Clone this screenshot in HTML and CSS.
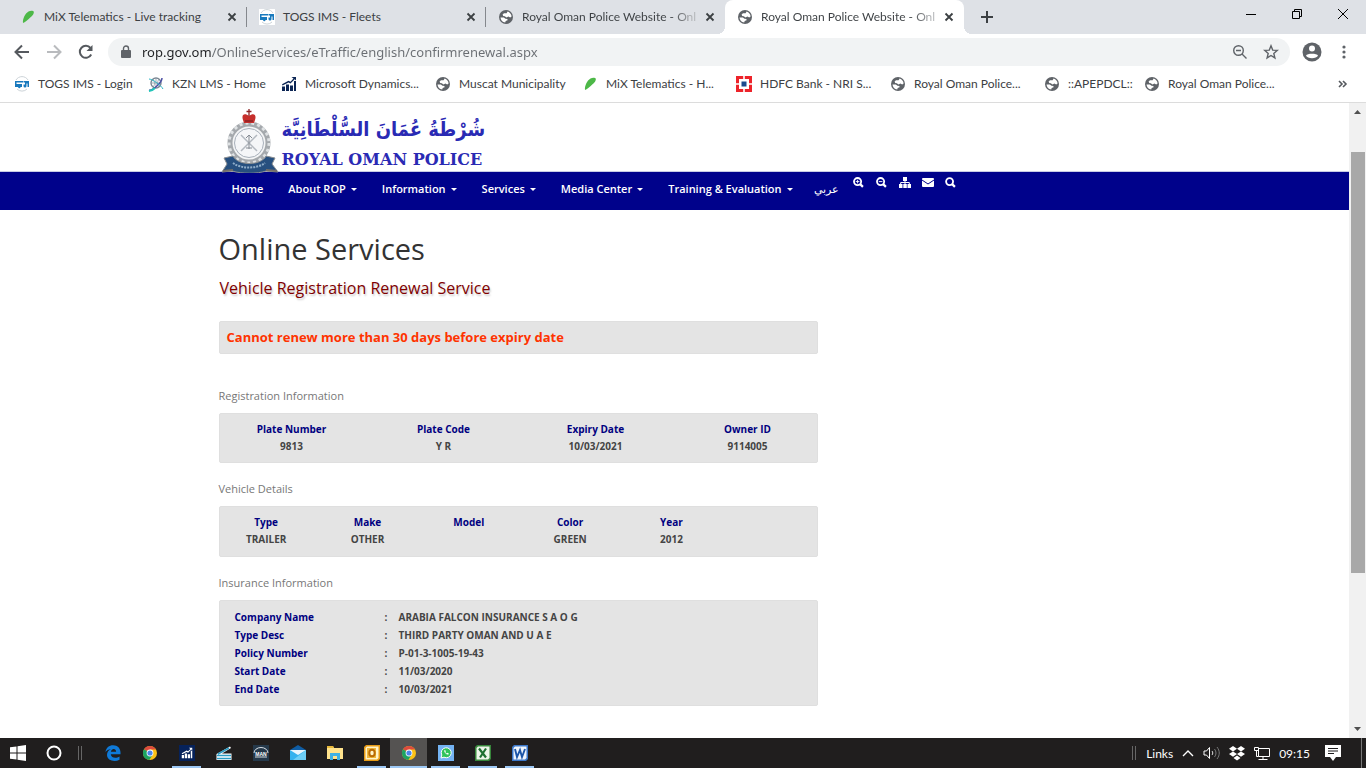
FILE: index.html
```html
<!DOCTYPE html>
<html lang="en">
<head>
<meta charset="utf-8">
<meta name="viewport" content="width=device-width, initial-scale=1">
<title>Royal Oman Police Website - Online Services</title>
<link rel="stylesheet" href="styles.css">
</head>
<body>
<svg class="defs" aria-hidden="true">
  <symbol id="globe" viewBox="0 0 14 14"><circle cx="7" cy="7" r="7" fill="#5f6368"/><path d="M5 3.200h2.600l1-1.600c2.300.7 3.900 2.700 4 5l-1.400.8-1.800-.8-1.900.9-1.700-1.200-1.600-.3-.6-1.500zM1.500 7.400l3.300.1 1.700 1.300 1.900.3.200 1.200-1.900.8-.5 1.500c-2.700-.4-4.500-2.600-4.700-5.200z" fill="#fff"/></symbol>
  <symbol id="leaf" viewBox="0 0 16 16"><path d="M3 14C2.500 10 5 4.500 8.500 2.500c2-1.100 4.800-1 5.300.2.500 1.700-1.300 4-3.800 6C7.500 10.800 5 13.500 3 14z" fill="#4db848"/></symbol>
  <symbol id="togs" viewBox="0 0 16 16"><rect width="16" height="16" fill="#fff"/><path d="M2 4a7 7 0 0 1 12 0M3 13a7 7 0 0 0 10 0" fill="none" stroke="#ccd3d8"/><path d="M1 5h8v1.500H2.500V8H8v3H6.500a1.200 1.200 0 0 1-2.400 0H1zM9.500 5H15v6h-1.500V7.500h-1V10a1.500 1.500 0 0 1-3 0V8.500H11V6.500H9.500z" fill="#1879bd"/></symbol>
  <symbol id="kzn" viewBox="0 0 16 16"><circle cx="8" cy="7" r="5" fill="none" stroke="#7b8793" stroke-width="1.400"/><path d="M3 7h10M8 2v10M5 3c2 3 2 6 0 8M11 3c-2 3-2 6 0 8" fill="none" stroke="#8a97a5" stroke-width=".8"/><path d="M1 14C4 15 14 7 14 2" fill="none" stroke="#4b4ea5" stroke-width="1.500"/><path d="M1 3c3 0 12 6 14 10" fill="none" stroke="#2bb5c4" stroke-width="1"/><path d="M1 15c3 0 4-1 6-3" fill="none" stroke="#22c4b8" stroke-width="2"/></symbol>
  <symbol id="dyn" viewBox="0 0 16 16"><path d="M1 10.500h3V15H1zM5 8.500h3V15H5zM9 9.500h3V15H9zM13 5h2v10h-2zM10.500 1H15v3.500l-1.300-1.200-4.200 4.200-2-1-6 3L1 8.300l6.500-3.500 2 1 3-3.200z" fill="currentColor"/></symbol>
  <symbol id="hdfc" viewBox="0 0 16 16"><path fill="#ed232a" d="M0 0h16v16H0z"/><path fill="#fff" d="M3 3h10v10H3zM7.200 0h1.600v16H7.200zM0 7.200h16v1.600H0z"/><path fill="#1b4a8d" d="M5.500 5.500h5v5h-5z"/></symbol>
  <symbol id="close" viewBox="0 0 16 16"><path d="m4.500 4.500 7 7m0-7-7 7" stroke="#3c4043" stroke-width="1.800"/></symbol>
  <symbol id="chrome" viewBox="0 0 16 16"><circle cx="8" cy="8" r="7" fill="#fbc116"/><path d="M8 8 2 4.300A7 7 0 0 1 14.100 4.600H8z" fill="#dd4b3e"/><path d="M2 4.300A7 7 0 0 0 7.300 15L10.500 10 8 8z" fill="#1da362"/><circle cx="8" cy="8" r="3.400" fill="#fff"/><circle cx="8" cy="8" r="2.600" fill="#4a86e8"/></symbol>
  <symbol id="zoomin" viewBox="0 0 12 12"><circle cx="5" cy="5" r="3.900" fill="none" stroke="#fff" stroke-width="2"/><path d="m7.800 7.800 3 3" stroke="#fff" stroke-width="2.400"/><path d="M3 5h4M5 3v4" stroke="#fff"/></symbol>
  <symbol id="zoomout" viewBox="0 0 12 12"><circle cx="5" cy="5" r="3.900" fill="none" stroke="#fff" stroke-width="2"/><path d="m7.800 7.800 3 3" stroke="#fff" stroke-width="2.400"/><path d="M3 5h4" stroke="#fff"/></symbol>
</svg>

<header class="tabs">
  <div class="tab"><svg class="i16"><use href="#leaf"/></svg><span class="tab-title">MiX Telematics - Live tracking</span><button class="x" aria-label="Close tab"><svg class="i16"><use href="#close"/></svg></button></div>
  <div class="tab"><svg class="i16"><use href="#togs"/></svg><span class="tab-title">TOGS IMS - Fleets</span><button class="x" aria-label="Close tab"><svg class="i16"><use href="#close"/></svg></button></div>
  <div class="tab plain"><svg class="i14"><use href="#globe"/></svg><span class="tab-title fade">Royal Oman Police Website - Onl</span><button class="x" aria-label="Close tab"><svg class="i16"><use href="#close"/></svg></button></div>
  <div class="tab active"><svg class="i14"><use href="#globe"/></svg><span class="tab-title fade">Royal Oman Police Website - Onl</span><button class="x" aria-label="Close tab"><svg class="i16"><use href="#close"/></svg></button></div>
  <button class="newtab" aria-label="New tab"><svg width="14" height="14"><path d="M7 1v12M1 7h12" stroke="#3c4043" stroke-width="2"/></svg></button>
  <div class="winctl">
    <button aria-label="Minimize"><svg width="12" height="12"><path d="M1 6.500h10" stroke="#000"/></svg></button>
    <button aria-label="Restore"><svg width="12" height="12" fill="none" stroke="#000"><path d="M1.500 3.500h7v7h-7zM3.500 3.500v-2h7v7h-2"/></svg></button>
    <button aria-label="Close"><svg width="12" height="12"><path d="m1 1 10 10M11 1 1 11" stroke="#000"/></svg></button>
  </div>
</header>

<div class="toolbar">
  <button class="tool" aria-label="Back"><svg width="16" height="16" fill="none" stroke="#55595e" stroke-width="2"><path d="M15 8H2M8 1.500 1.500 8 8 14.500"/></svg></button>
  <button class="tool" aria-label="Forward"><svg width="16" height="16" fill="none" stroke="#b9bbbe" stroke-width="2"><path d="M1 8h13M8 1.500 14.500 8 8 14.500"/></svg></button>
  <button class="tool" aria-label="Reload"><svg width="16" height="16"><path d="M13.200 10.500A6 6 0 1 1 12.500 4" fill="none" stroke="#55595e" stroke-width="2"/><path d="M14.500 1v6h-6z" fill="#55595e"/></svg></button>
  <div class="omni">
    <svg width="10" height="14"><rect y="5" width="10" height="8" rx="1" fill="#5f6368"/><path d="M2.500 5.500V3.500a2.500 2.500 0 0 1 5 0v2" fill="none" stroke="#5f6368" stroke-width="1.400"/></svg>
    <input class="url" aria-label="Address" value="rop.gov.om/OnlineServices/eTraffic/english/confirmrenewal.aspx">
    <button aria-label="Zoom"><svg width="16" height="16" fill="none" stroke="#5f6368" stroke-width="1.400"><circle cx="6.500" cy="6.500" r="4.800"/><path d="M4 6.500h5M10 10l4.500 4.500"/></svg></button>
    <button aria-label="Bookmark"><svg width="16" height="16" fill="none" stroke="#5f6368" stroke-width="1.400"><path d="m8 1.800 1.700 4.300 4.600.3-3.500 3 1.100 4.500L8 11.500l-3.900 2.400 1.100-4.500-3.500-3 4.600-.3z"/></svg></button>
  </div>
  <button class="avatar" aria-label="Profile"><svg width="20" height="20"><circle cx="10" cy="10" r="9.500" fill="#5f6368"/><circle cx="10" cy="6.500" r="3" fill="#fff"/><path d="M4 13.500c1-2.200 11-2.200 12 0-1.500 3.700-10.500 3.700-12 0z" fill="#fff"/></svg></button>
  <button class="dots" aria-label="Menu"><svg width="4" height="14" fill="#5f6368"><circle cx="2" cy="2" r="1.600"/><circle cx="2" cy="7" r="1.600"/><circle cx="2" cy="12" r="1.600"/></svg></button>
</div>

<nav class="marks" aria-label="Bookmarks">
  <a href="#"><svg class="i16"><use href="#togs"/></svg>TOGS IMS - Login</a>
  <a href="#"><svg class="i16"><use href="#kzn"/></svg>KZN LMS - Home</a>
  <a href="#"><svg class="i16 navy"><use href="#dyn"/></svg>Microsoft Dynamics...</a>
  <a href="#"><svg class="i14"><use href="#globe"/></svg>Muscat Municipality</a>
  <a href="#"><svg class="i16"><use href="#leaf"/></svg>MiX Telematics - H...</a>
  <a href="#"><svg class="i16"><use href="#hdfc"/></svg>HDFC Bank - NRI S...</a>
  <a href="#"><svg class="i14"><use href="#globe"/></svg>Royal Oman Police...</a>
  <a href="#"><svg class="i14"><use href="#globe"/></svg>::APEPDCL::</a>
  <a href="#"><svg class="i14"><use href="#globe"/></svg>Royal Oman Police...</a>
  <button class="more" aria-label="More bookmarks"><svg width="10" height="8" fill="none" stroke="#55595e" stroke-width="1.600"><path d="m1 1 3 3-3 3M5 1l3 3-3 3"/></svg></button>
</nav>

<div class="view">
  <div class="page">
    <div class="brandbar">
      <div class="wrap brand">
        <svg class="emblem" viewBox="0 0 58 64">
          <circle cx="28" cy="34" r="19" fill="#f4f5f6" stroke="#a5a9ad" stroke-width="5"/>
          <circle cx="28" cy="34" r="20" fill="none" stroke="#dfe2e4" stroke-width="3" stroke-dasharray="3 3"/>
          <circle cx="28" cy="34" r="14.500" fill="#f5f6f8" stroke="#a8b0ba"/>
          <path d="m20 26 16 16M36 26 20 42" stroke="#b4b9c0" stroke-width="1.500"/>
          <path d="M28 27v13M25 29l3-3 3 3M25 39h6" fill="none" stroke="#858b93"/>
          <path d="M22 11c-2-6 2-7 6-4 4-3 8-2 6 4l-1 3H23z" fill="#c62f2c"/>
          <path d="M28 0v7M25.500 2.500h5M24 12h8" stroke="#8c2324" stroke-width="1.300"/>
          <path d="M3 49l9-2c5 10 28 10 33 0l9 2-3 6 6 8-12-1c-9 3-24 3-34 0l-10 1 5-8z" fill="#27507f" stroke="#8b8f92"/>
          <path d="M12 54c8 6 24 6 32 0" fill="none" stroke="#8fadc9" stroke-width="2" stroke-dasharray="2 1"/>
          <path d="m2 62 10-1M56 62l-11-1" stroke="#756f69" stroke-width="2"/>
        </svg>
        <div class="names"><span class="ar" lang="ar" dir="rtl">شُرْطَةُ عُمَانَ السُّلْطَانِيَّة</span><span class="en">ROYAL OMAN POLICE</span></div>
      </div>
    </div>
    <nav class="menu" aria-label="Main">
      <div class="wrap menu-in">
        <a href="#">Home</a><a href="#" class="drop">About ROP</a><a href="#" class="drop">Information</a><a href="#" class="drop">Services</a><a href="#" class="drop">Media Center</a><a href="#" class="drop">Training &amp; Evaluation</a><a href="#" lang="ar" class="lang">عربي</a>
        <div class="tools">
          <button aria-label="Zoom in"><svg class="i11"><use href="#zoomin"/></svg></button>
          <button aria-label="Zoom out"><svg class="i11"><use href="#zoomout"/></svg></button>
          <button aria-label="Site map"><svg width="12" height="11" viewBox="0 0 12 11"><path d="M4 0h4v4H4zM0 7h3.500v4H0zM4.300 7h3.500v4H4.300zM8.500 7H12v4H8.500z" fill="#fff"/><path d="M6 3v5M1.700 8V5.500h8.600V8" fill="none" stroke="#fff"/></svg></button>
          <button aria-label="Mail"><svg width="12" height="9" viewBox="0 0 12 9"><rect width="12" height="9" rx="1" fill="#fff"/><path d="m0 2 6 4 6-4" fill="none" stroke="#00028b"/></svg></button>
          <button aria-label="Search"><svg class="i11" viewBox="0 0 12 12"><circle cx="5" cy="5" r="3.800" fill="none" stroke="#fff" stroke-width="2"/><path d="m7.800 7.800 3 3" stroke="#fff" stroke-width="2.400"/></svg></button>
        </div>
      </div>
    </nav>
    <main class="wrap">
      <h1>Online Services</h1>
      <h2>Vehicle Registration Renewal Service</h2>
      <p class="panel alert">Cannot renew more than 30 days before expiry date</p>
      <h3>Registration Information</h3>
      <div class="panel reg">
        <table class="cols">
          <tr><th>Plate Number</th><th>Plate Code</th><th>Expiry Date</th><th>Owner ID</th></tr>
          <tr><td>9813</td><td>Y R</td><td>10/03/2021</td><td>9114005</td></tr>
        </table>
      </div>
      <h3>Vehicle Details</h3>
      <div class="panel veh">
        <table class="cols">
          <tr><th>Type</th><th>Make</th><th>Model</th><th>Color</th><th>Year</th><td></td></tr>
          <tr><td>TRAILER</td><td>OTHER</td><td></td><td>GREEN</td><td>2012</td><td></td></tr>
        </table>
      </div>
      <h3>Insurance Information</h3>
      <div class="panel ins">
        <table class="rows">
          <tr><th>Company Name</th><td class="colon">:</td><td>ARABIA FALCON INSURANCE S A O G</td></tr>
          <tr><th>Type Desc</th><td class="colon">:</td><td>THIRD PARTY OMAN AND U A E</td></tr>
          <tr><th>Policy Number</th><td class="colon">:</td><td>P-01-3-1005-19-43</td></tr>
          <tr><th>Start Date</th><td class="colon">:</td><td>11/03/2020</td></tr>
          <tr><th>End Date</th><td class="colon">:</td><td>10/03/2021</td></tr>
        </table>
      </div>
    </main>
  </div>
  <div class="scroll" aria-hidden="true">
    <svg width="17" height="17"><path d="M5 11h7L8.500 7z" fill="#505050"/></svg>
    <div class="track"><div class="thumb"></div></div>
    <svg width="17" height="17"><path d="M5 6h7l-3.500 4z" fill="#505050"/></svg>
  </div>
</div>

<footer class="taskbar">
  <button class="start" aria-label="Start"><svg width="16" height="16" fill="#fff"><path d="M0 2.300 6.500 1.400v6.100H0zM7.500 1.200 16 0v7.500H7.500zM0 8.500h6.500v6.100L0 13.700zM7.500 8.500H16V16l-8.500-1.200z"/></svg></button>
  <button class="start" aria-label="Cortana"><svg width="16" height="16"><circle cx="8" cy="8" r="6.500" fill="none" stroke="#fff" stroke-width="2"/></svg></button>
  <span class="grip"></span>
  <div class="apps">
    <button aria-label="Edge"><svg class="i16" viewBox="0 0 16 16"><path d="M.5 7C1 3 4 .3 8.200.3c4.500 0 7.300 3.200 7.300 7.200v1.700H5.800c.2 4 5.700 4.300 8.700 2.300v3.200C9.500 17.500 2 15.500 2 10c0-3 1.700-5 4-6C3.500 4.300 1.500 5.500.5 7zm5.400-.3h5.200c0-3.500-4.600-3.500-5.200 0z" fill="#0f7ad8"/></svg></button>
    <button aria-label="Chrome"><svg class="i16"><use href="#chrome"/></svg></button>
    <button class="run" aria-label="Dynamics"><svg class="i16 tile"><use href="#dyn"/></svg></button>
    <button aria-label="Scanner"><svg class="i16" viewBox="0 0 16 16"><path d="M.5 9 14 1.500l1 1.500-9 5.500h9.500V15H.5z" fill="#fff"/><path d="m2 9 11-6M1 10.500h14M1 13.500h14" stroke="#2a9bc4" stroke-width="1.500"/></svg></button>
    <button aria-label="MAN"><svg class="i16" viewBox="0 0 16 16"><rect width="16" height="16" fill="#25394b"/><path d="M1 8a7 5.500 0 0 1 14 0M2 12h12" fill="none" stroke="#d8dee3"/><text x="8" y="11" class="man">MAN</text></svg></button>
    <button aria-label="Mail"><svg class="i16" viewBox="0 0 16 16"><path d="M0 5 8 0l8 5v10H0z" fill="#0f5ca3"/><path d="M0 5h16v10H0z" fill="#35b2ee"/><path d="M0 5h16l-8 5z" fill="#e8f5fd"/><path d="M16 5v10H3z" fill="#6dcff7"/></svg></button>
    <button aria-label="Files"><svg class="i16" viewBox="0 0 16 16"><path d="M0 1h6l1 2h9v11H0z" fill="#ffe38c"/><path d="M0 1h6l1 2H0z" fill="#e8b93b"/><path d="M3 15V8h10v7h-3v-4H6v4z" fill="#3eb1e4"/></svg></button>
    <button class="run" aria-label="Outlook"><svg class="i16" viewBox="0 0 16 16"><path d="M2 0h14v14l-2 2H0V2z" fill="#e69b16"/><path d="M3 1.500h11.500V13L13 14.500H1.500V3z" fill="#fff3c9"/><path d="M3 3h9v10H3z" fill="#f0b83a"/><ellipse cx="8" cy="8" rx="2.700" ry="3.300" fill="#fff3c9" stroke="#b96a05" stroke-width="2"/></svg></button>
    <button class="run on" aria-label="Chrome, active"><svg class="i16"><use href="#chrome"/></svg></button>
    <button class="run" aria-label="WhatsApp"><svg class="i16" viewBox="0 0 16 16"><rect width="16" height="16" fill="#74b3f3"/><path d="m3 13 .8-3a5 5 0 1 1 2.200 2.200z" fill="#2fc35b" stroke="#fff"/><path d="M6.300 5.300c-.5 2 2 4.600 4.200 4.300l.3-1-1.500-.8-.7.700L7.400 7.200l.4-.8-.6-1.300z" fill="#fff"/></svg></button>
    <button class="run" aria-label="Excel"><svg class="i16" viewBox="0 0 16 16"><path d="M2 0h14v14l-2 2H0V2z" fill="#37863b"/><path d="M3 1.500h11.500V13L13 14.500H1.500V3z" fill="#edf6e9"/><path d="m4 3.500 7 9M11 3.500l-6 9" stroke="#1e7031" stroke-width="2.200"/></svg></button>
    <button class="run" aria-label="Word"><svg class="i16" viewBox="0 0 16 16"><path d="M2 0h14v14l-2 2H0V2z" fill="#3a76c8"/><path d="M3 1.500h11.500V13L13 14.500H1.500V3z" fill="#eef5fd"/><path d="m3 4 2 8 3-7 2 7 3-8" fill="none" stroke="#1b55a8" stroke-width="1.900"/></svg></button>
  </div>
  <div class="tray">
    <span class="grip"></span>
    <span class="links">Links</span>
    <svg width="12" height="8" fill="none" stroke="#fff" stroke-width="1.400"><path d="m1 7 5-5 5 5"/></svg>
    <svg width="17" height="14" fill="none" stroke="#fff"><path d="M1 5h2.500l3-3.500v11l-3-3.500H1z"/><path d="M9 5c1 1 1 3 0 4" stroke="#ddd"/><path d="M11.500 3c2 2.500 2 5.500 0 8M14 1c3 4 3 8 0 12" stroke="#777"/></svg>
    <svg width="16" height="15" fill="#fff"><path d="m4 0 4 2.700L4 5.400 0 2.700zM12 0l4 2.700-4 2.700-4-2.700zM4 5.400l4 2.700-4 2.700-4-2.700zM12 5.400l4 2.700-4 2.700-4-2.700zM8 9.500l3.500 2.500L8 14.500 4.500 12z"/></svg>
    <svg width="16" height="14" fill="none" stroke="#fff"><path d="M4.500 2.500h11v8h-11zM4.500 13.500h9M9 10.500v3M.5 1.500h4v3h-4zM2.500 4.500v6h2"/></svg>
    <time class="clock">09:15</time>
    <svg width="16" height="16"><path d="M0 0h16v12h-5l-3 4-3-4H0z" fill="#fff"/><path d="M3 3.500h10M3 6h10M3 8.500h6" stroke="#1c1b1d"/></svg>
    <span class="edge"></span>
  </div>
</footer>
</body>
</html>
```
FILE: styles.css
```css
* { box-sizing: border-box; }
html, body { height: 100%; }
body {
  margin: 0;
  display: flex;
  flex-direction: column;
  overflow: hidden;
  background: #fff;
  font-family: "Open Sans", "Noto Sans", sans-serif;
  font-size: 12px;
  color: #3c4043;
}
button {
  border: 0;
  padding: 0;
  background: none;
  display: flex;
  align-items: center;
  justify-content: center;
}
a { color: inherit; text-decoration: none; }
svg { display: block; flex: none; }
.defs { position: absolute; width: 0; height: 0; }
.i16 { width: 16px; height: 16px; }
.i14 { width: 14px; height: 14px; margin: 0 1px; }
.i11 { width: 11px; height: 11px; }
.navy { color: #0b2554; }

/* Browser tabs */
.tabs, .marks, .taskbar { font-family: Lato, "Noto Sans", sans-serif; }
.tabs { display: flex; height: 34px; padding-left: 8px; background: #dee1e6; flex: none; }
.tab {
  display: flex;
  align-items: center;
  gap: 8px;
  width: 239px;
  padding: 0 7px 0 12px;
  background: linear-gradient(#85888d, #85888d) right center / 1px 20px no-repeat;
}
.tab.plain { background: none; }
.tab.active { position: relative; background: #fff; border-radius: 8px 8px 0 0; }
.tab.active::before, .tab.active::after {
  content: "";
  position: absolute;
  bottom: 0;
  width: 8px;
  height: 8px;
}
.tab.active::before { right: 100%; background: radial-gradient(circle at 0 0, #dee1e6 8px, #fff 8px); }
.tab.active::after { left: 100%; background: radial-gradient(circle at 100% 0, #dee1e6 8px, #fff 8px); }
.tab-title { flex: 1; min-width: 0; padding-bottom: 2px; white-space: nowrap; }
.fade { color: transparent; background: linear-gradient(90deg, #3c4043 86%, #b4b6b9 98%); -webkit-background-clip: text; background-clip: text; padding-right: 2px; margin-right: -2px; }
.newtab { width: 28px; margin-left: 9px; }
.winctl { margin-left: auto; display: flex; height: 28px; }
.winctl button { width: 46px; }

/* Toolbar */
.toolbar { display: flex; align-items: center; height: 36px; padding: 0 6px; flex: none; }
.tool { width: 32px; height: 32px; }
.omni {
  flex: 1;
  display: flex;
  align-items: center;
  gap: 11px;
  height: 28px;
  margin-left: 6px;
  padding: 0 9px 0 13px;
  border-radius: 14px;
  background: #f1f3f4;
}
.omni button { width: 20px; height: 20px; }
.url {
  flex: 1;
  min-width: 0;
  border: 0;
  padding: 0;
  font-family: "Noto Sans", "Open Sans", sans-serif;
  font-size: 13px;
  color: transparent;
  background: linear-gradient(90deg, #202124 70px, #6a6e73 70px);
  -webkit-background-clip: text;
  background-clip: text;
}
.avatar { width: 20px; margin-left: 12px; }
.dots { width: 20px; margin: 0 6px 0 12px; }

/* Bookmarks */
.marks {
  display: grid;
  grid-template-columns: 134px 133px 154px 147px 154px 154px 154px 100px 1fr auto;
  align-items: center;
  height: 33px;
  padding: 0 18px 5px 14px;
  border-bottom: 1px solid #dcdcdc;
  flex: none;
}
.marks a { display: flex; align-items: center; gap: 8px; white-space: nowrap; }

/* Page viewport */
.view { flex: 1; min-height: 0; display: flex; }
.page { flex: 1; overflow: hidden; }
.scroll { width: 17px; display: flex; flex-direction: column; background: #f1f1f1; }
.track { flex: 1; padding: 32px 1px 0 2px; }
.thumb { height: 74%; background: #a8a8a8; }
.wrap { max-width: 912px; margin: 0 auto; }
.brandbar { border-bottom: 1px solid #c8cce4; }
.brand { display: flex; gap: 3px; padding: 6px 0 0 2px; height: 68px; }
.emblem { width: 58px; height: 64px; }
.names { display: flex; flex-direction: column; align-items: flex-start; white-space: nowrap; color: #2a2ab4; }
.ar { font: 700 20px/40px "DejaVu Sans Condensed", "DejaVu Sans", sans-serif; font-stretch: condensed; }
.en { font: 700 16px/22px "DejaVu Serif", serif; }
.menu { background: #00028b; color: #fff; height: 38px; }
.menu-in { display: flex; gap: 25px; padding-left: 13px; font-size: 11px; font-weight: 600; line-height: 34px; white-space: nowrap; }
.lang { margin-left: -4px; font-weight: 400; }
.drop::after {
  content: "";
  display: inline-block;
  margin-left: 5px;
  vertical-align: 2px;
  border: 3px solid transparent;
  border-top-color: #fff;
  border-bottom: 0;
}
.tools { display: flex; gap: 11px; margin-left: -11px; padding-top: 5px; height: 16px; }
.tools button { width: 12px; height: 11px; }

/* Content */
h1, h2, h3 { margin: 0; font-weight: 400; }
h1 { padding-top: 19px; font-size: 29px; line-height: 40px; color: #333; }
h2 { padding: 8px 0 0 1px; font-size: 16px; line-height: 22px; color: #800000; text-shadow: 1px 2px 2px #ccc; }
h3 { padding-bottom: 8px; font-size: 11px; line-height: 18px; color: #777; }
.panel {
  max-width: 599px;
  margin: 0 0 17px;
  background: #e4e4e4;
  border: 1px solid #dfdfdf;
  border-radius: 2px;
  overflow: hidden;
}
.alert { margin: 22px 0 33px; padding: 6px 7px; font-size: 13px; font-weight: 700; line-height: 19px; color: #ff3300; }
.reg { padding: 7px 0; }
.veh { padding: 7px 0 8px; }
.ins { padding: 7px 15px; }
table { border-collapse: collapse; font-weight: 700; }
th, td { padding: 0; }
th { font-size: 10px; color: #000080; }
td { font-size: 10px; color: #444; }
.cols { width: 608px; margin-left: -4px; table-layout: fixed; text-align: center; line-height: 17px; }
.rows { line-height: 18px; text-align: left; }
.rows th { width: 150px; }
.rows .colon { width: 14px; }

/* Taskbar */
.taskbar { display: flex; height: 30px; flex: none; background: #201e1e; color: #fff; }
.start { width: 36px; }
.grip { width: 4px; height: 14px; margin: 8px 12px 0 6px; border: 1px solid #666; border-width: 0 1px; }
.apps { display: flex; }
.apps button { width: 37px; position: relative; }
.apps .run::after { content: ""; position: absolute; inset: auto 4px 0; height: 2px; background: #9dc8f5; }
.apps .on { background: #555352; }
.apps .on::after { left: 0; right: 0; }
.tile { padding: 2px; background: #06225a; color: #fff; }
.man { font: 700 5px "Liberation Sans", sans-serif; fill: #fff; text-anchor: middle; }
.tray { margin-left: auto; display: flex; align-items: center; gap: 9px; }
.tray .grip { margin: 0 1px 0 0; }
.clock { margin: 0 6px 0 0; }
.edge { width: 5px; height: 30px; margin-left: 11px; border-left: 1px solid #777; }
```
